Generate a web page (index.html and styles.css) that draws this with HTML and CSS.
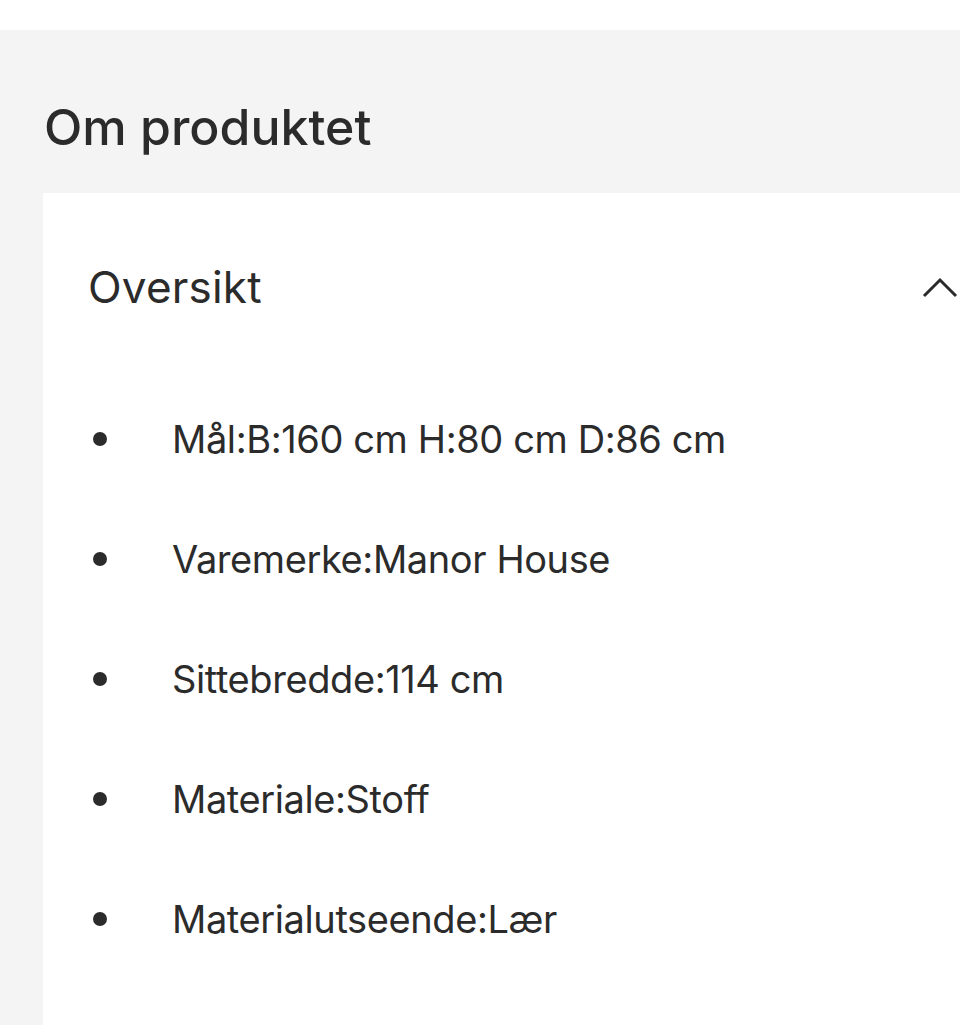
FILE: index.html
```html
<!DOCTYPE html>
<html lang="no">
<head>
<meta charset="utf-8">
<link rel="stylesheet" href="styles.css">
</head>
<body>
<div class="topbar"></div>
<section class="about">
  <h2 class="about-title">Om produktet</h2>
  <div class="card">
    <div class="acc-head">
      <span class="acc-title">Oversikt</span>
      <svg class="chev" width="36" height="22" viewBox="0 0 36 22"><path d="M2 20 L18 4 L34 20" fill="none" stroke="#2b2b2b" stroke-width="3"/></svg>
    </div>
    <ul class="specs">
      <li><span class="dot"></span><span>Mål:B:160 cm H:80 cm D:86 cm</span></li>
      <li><span class="dot"></span><span>Varemerke:Manor House</span></li>
      <li><span class="dot"></span><span>Sittebredde:114 cm</span></li>
      <li><span class="dot"></span><span>Materiale:Stoff</span></li>
      <li><span class="dot"></span><span>Materialutseende:Lær</span></li>
    </ul>
  </div>
</section>
</body>
</html>
```
FILE: styles.css
```css
html, body { margin: 0; padding: 0; background: #fff; }
body { font-family: Inter, "Noto Sans", sans-serif; color: #2b2b2b; width: 960px; height: 1025px; overflow: hidden; }
.topbar { height: 30px; background: #fff; }
.about { background: #f4f4f4; padding: 0 0 0 43px; height: 995px; }
.about-title { margin: 0; padding: 66px 0 0 1px; height: 163px; box-sizing: border-box; font-size: 50px; font-weight: 500; line-height: 62px; letter-spacing: 0; }
.card { background: #fff; padding: 0 0 0 45px; height: 832px; }
.acc-head { display: flex; justify-content: space-between; align-items: center; height: 188px; padding-right: 2px; }
.acc-title { font-size: 44px; font-weight: 400; letter-spacing: 0.2px; }
.specs { list-style: none; margin: 0; padding: 0; display: flex; flex-direction: column; }
.specs li { display: flex; align-items: center; height: 120px; padding-bottom: 4px; box-sizing: border-box; font-size: 38px; letter-spacing: -0.4px; }
.dot { width: 14px; height: 14px; border-radius: 50%; background: #2b2b2b; margin-left: 5px; margin-right: 65px; flex: none; }
```
